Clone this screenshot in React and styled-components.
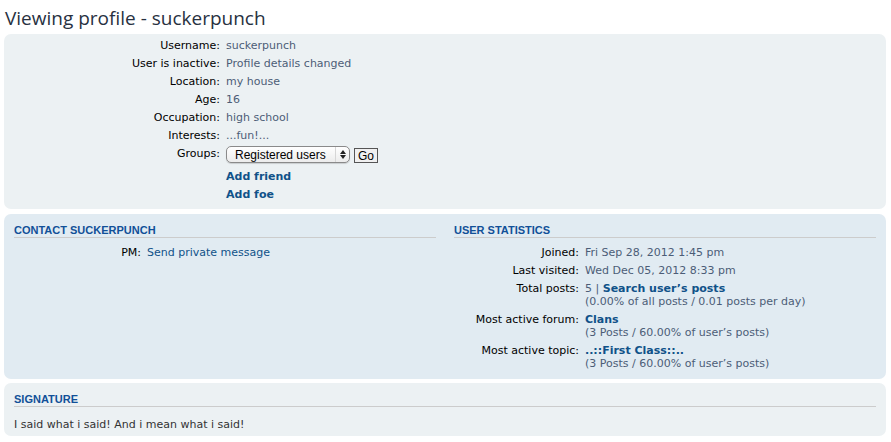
import React from "react";
import styled, { createGlobalStyle } from "styled-components";

const GlobalStyle = createGlobalStyle`
  body {
    margin: 0;
    background: #fff;
    font-family: "DejaVu Sans", Verdana, sans-serif;
    font-size: 11px;
    color: #333;
  }
`;

const Page = styled.div`
  padding: 0 5px 0 4px;
`;

const Title = styled.h2`
  margin: 0 0 3px 1px;
  padding-top: 5px;
  font-family: "Open Sans", "DejaVu Sans", sans-serif;
  font-weight: 500;
  font-size: 19px;
  line-height: 26px;
  color: #28313f;
`;

const Panel = styled.div`
  background: ${(p) => (p.$alt ? "#e1ebf2" : "#ecf1f3")};
  border-radius: 7px;
  padding: ${(p) => p.$pad || "9px 10px 7px"};
  margin-bottom: ${(p) => p.$mb || 5}px;
`;

const Columns = styled.div`
  display: grid;
  grid-template-columns: 1fr 1fr;
  column-gap: 18px;
`;

const Heading = styled.h3`
  margin: 0 0 5px;
  font-family: "Liberation Sans", Arial, sans-serif;
  font-size: 11px;
  font-weight: bold;
  line-height: 14px;
  text-transform: uppercase;
  color: #115098;
  border-bottom: 1px solid #cccccc;
`;

const Details = styled.dl`
  display: grid;
  grid-template-columns: ${(p) => p.$label} 1fr;
  column-gap: 6px;
  margin: 0;
`;

const Label = styled.dt`
  text-align: right;
  color: #000;
  line-height: 13px;
  padding: 3px 0 2px;
`;

const Value = styled.dd`
  margin: 0;
  color: #4c5d77;
  line-height: 13px;
  padding: 3px 0 2px;
`;

const Line = styled.div`
  height: 13px;
`;

const Link = styled.a`
  color: #105289;
  font-weight: ${(p) => (p.$bold ? "bold" : "normal")};
  text-decoration: none;
  cursor: pointer;
`;

const GroupForm = styled.div`
  display: flex;
  align-items: flex-end;
  gap: 4px;
  margin: -1px 0 2px;
`;

const SelectWrap = styled.div`
  position: relative;
  width: 124px;
  height: 17px;
`;

const Select = styled.select`
  appearance: none;
  width: 100%;
  height: 100%;
  box-sizing: border-box;
  border: 1px solid #8a8a8a;
  border-radius: 5px;
  background: linear-gradient(#ffffff, #ececec);
  font-family: "Liberation Sans", Arial, sans-serif;
  font-size: 12px;
  color: #000;
  padding: 0 0 0 8px;
  margin: 0;
  box-shadow: 0 1px 1px rgba(0, 0, 0, 0.15);
`;

const Arrows = styled.span`
  position: absolute;
  right: 0;
  top: 1px;
  bottom: 1px;
  width: 14px;
  border-left: 1px solid #d6d6d6;
  display: flex;
  flex-direction: column;
  align-items: center;
  justify-content: center;
  gap: 1px;
  pointer-events: none;
`;

const Arrow = styled.span`
  width: 0;
  height: 0;
  border-left: 3px solid transparent;
  border-right: 3px solid transparent;
  ${(p) => (p.$up ? "border-bottom" : "border-top")}: 4px solid #222;
`;

const GoButton = styled.button`
  height: 15px;
  box-sizing: border-box;
  border: 1px solid #555;
  background: #f0f0f0;
  font-family: "Liberation Sans", Arial, sans-serif;
  font-size: 12px;
  line-height: 12px;
  padding: 0 3px;
  margin: 0;
  color: #000;
`;

const Signature = styled.div`
  color: #333;
  line-height: 18px;
  padding-top: 4px;
`;

function Row({ label, children }) {
  return (
    <>
      <Label>{label}</Label>
      <Value>{children}</Value>
    </>
  );
}

export default function App() {
  return (
    <Page>
      <GlobalStyle />
      <Title>Viewing profile - suckerpunch</Title>

      <Panel $pad="2px 10px 6px">
        <Details $label="206px">
          <Row label="Username:">suckerpunch</Row>
          <Row label="User is inactive:">Profile details changed</Row>
          <Row label="Location:">my house</Row>
          <Row label="Age:">16</Row>
          <Row label="Occupation:">high school</Row>
          <Row label="Interests:">...fun!...</Row>
          <Row label="Groups:">
            <GroupForm>
              <SelectWrap>
                <Select defaultValue="reg">
                  <option value="reg">Registered users</option>
                </Select>
                <Arrows>
                  <Arrow $up />
                  <Arrow />
                </Arrows>
              </SelectWrap>
              <GoButton>Go</GoButton>
            </GroupForm>
          </Row>
          <Row label="">
            <Link $bold>Add friend</Link>
          </Row>
          <Row label="">
            <Link $bold>Add foe</Link>
          </Row>
        </Details>
      </Panel>

      <Panel $alt $mb={4}>
        <Columns>
          <div>
            <Heading>Contact suckerpunch</Heading>
            <Details $label="127px">
              <Row label="PM:">
                <Link>Send private message</Link>
              </Row>
            </Details>
          </div>
          <div>
            <Heading>User statistics</Heading>
            <Details $label="125px">
              <Row label="Joined:">Fri Sep 28, 2012 1:45 pm</Row>
              <Row label="Last visited:">Wed Dec 05, 2012 8:33 pm</Row>
              <Row label="Total posts:">
                <Line>
                  5 | <Link $bold>Search user’s posts</Link>
                </Line>
                <Line>(0.00% of all posts / 0.01 posts per day)</Line>
              </Row>
              <Row label="Most active forum:">
                <Line>
                  <Link $bold>Clans</Link>
                </Line>
                <Line>(3 Posts / 60.00% of user’s posts)</Line>
              </Row>
              <Row label="Most active topic:">
                <Line>
                  <Link $bold>..::First Class::..</Link>
                </Line>
                <Line>(3 Posts / 60.00% of user’s posts)</Line>
              </Row>
            </Details>
          </div>
        </Columns>
      </Panel>

      <Panel $pad="9px 10px 2px" $mb={0}>
        <Heading>Signature</Heading>
        <Signature>I said what i said! And i mean what i said!</Signature>
      </Panel>
    </Page>
  );
}
